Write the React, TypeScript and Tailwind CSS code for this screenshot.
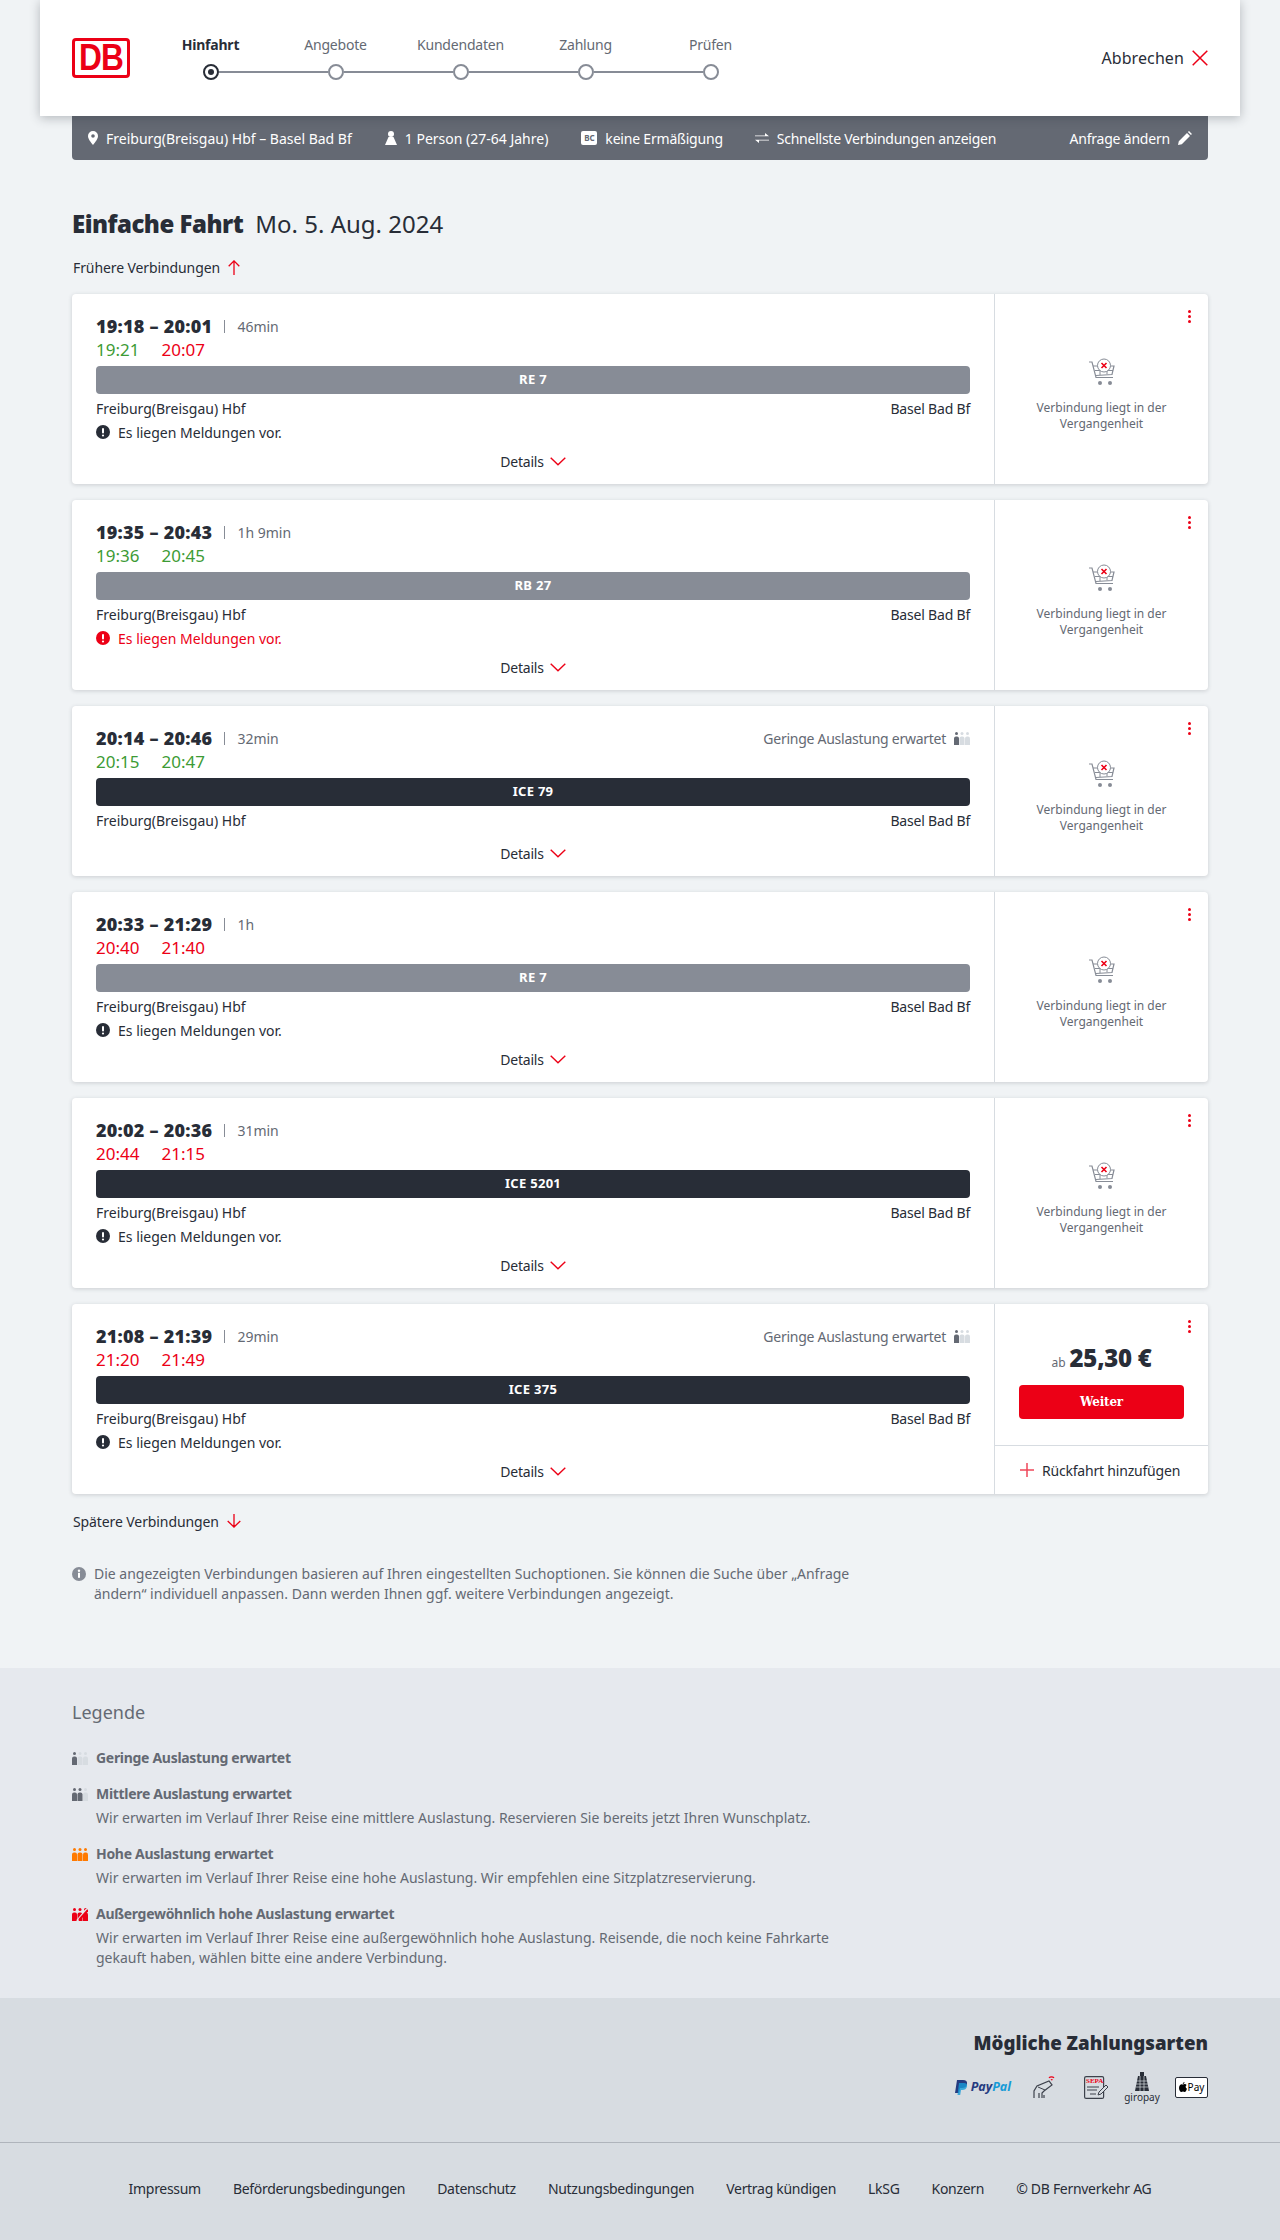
import React from "react";

const DARK = "#282d37";
const RED = "#ec0016";

function XIcon() {
  return (
    <svg width="16" height="16" viewBox="0 0 16 16" fill="none" className="shrink-0">
      <path d="M.7.7l14.600 14.600M15.300.7.700 15.300" stroke={RED} strokeWidth="1.500" />
    </svg>
  );
}
function Up() {
  return (
    <svg width="12" height="15" viewBox="0 0 12 15" fill="none" className="shrink-0">
      <path d="M6 15V1M.7 6.200 6 .9l5.300 5.300" stroke={RED} strokeWidth="1.300" />
    </svg>
  );
}
function Down() {
  return (
    <svg width="14" height="14" viewBox="0 0 14 14" fill="none" className="shrink-0">
      <path d="M7 0v13M.7 7 7 13l6.300-6" stroke={RED} strokeWidth="1.300" />
    </svg>
  );
}
function Chev() {
  return (
    <svg width="16" height="9" viewBox="0 0 16 9" fill="none" className="shrink-0">
      <path d="M.7.7 8 7.800 15.300.7" stroke={RED} strokeWidth="1.400" />
    </svg>
  );
}
function PlusIcon() {
  return (
    <svg width="14" height="14" viewBox="0 0 14 14" fill="none" className="shrink-0">
      <path d="M7 0v14M0 7h14" stroke="#f0475a" strokeWidth="1.500" />
    </svg>
  );
}
function Pin() {
  return (
    <svg width="10" height="14" viewBox="0 0 10 14" className="shrink-0">
      <path fillRule="evenodd" fill="#fff" d="M5 0a5 5 0 0 1 5 5c0 3-3 6.500-5 9-2-2.500-5-6-5-9a5 5 0 0 1 5-5zm0 3.200a1.800 1.800 0 1 0 0 3.600 1.800 1.800 0 0 0 0-3.600z" />
    </svg>
  );
}
function Person() {
  return (
    <svg width="12" height="14" viewBox="0 0 12 14" className="shrink-0">
      <circle cx="6" cy="3" r="3" fill="#fff" />
      <path d="M3.500 6h5L12 14H0z" fill="#fff" />
    </svg>
  );
}
function Swap() {
  return (
    <svg width="14" height="10" viewBox="0 0 14 10" className="shrink-0">
      <path d="M0 2.400h10V0l4 3.200H0zM14 7.600H4V10L0 6.800h14z" fill="#fff" />
    </svg>
  );
}
function Pencil() {
  return (
    <svg width="14" height="14" viewBox="0 0 14 14" className="shrink-0">
      <path d="M0 14l.8-3.800L9 2l3 3-8.200 8.200zM9.900 1.100 11 0l3 3-1.100 1.100z" fill="#fff" />
    </svg>
  );
}
function Alert({ color }: { color: string }) {
  return (
    <svg width="14" height="14" viewBox="0 0 14 14" className="shrink-0">
      <circle cx="7" cy="7" r="7" fill={color} />
      <rect x="6" y="3" width="2" height="5.500" rx="1" fill="#fff" />
      <circle cx="7" cy="10.500" r="1.100" fill="#fff" />
    </svg>
  );
}
function Info() {
  return (
    <svg width="14" height="14" viewBox="0 0 14 14" className="shrink-0">
      <circle cx="7" cy="7" r="7" fill="#878c96" />
      <circle cx="7" cy="3.700" r="1.200" fill="#fff" />
      <rect x="6" y="5.800" width="2" height="5" fill="#fff" />
    </svg>
  );
}
function Load({ level }: { level: 1 | 2 | 3 | 4 }) {
  const on = level === 3 ? "#ff7a00" : level === 4 ? RED : "#646973";
  const off = "#d7dce1";
  const c = (i: number) => (level >= i + 1 ? on : off);
  return (
    <svg width="16" height="13" viewBox="0 0 16 13" className="shrink-0">
      {[0, 1, 2].map((i) => (
        <g key={i} fill={c(i)}>
          <circle cx={2.500 + i * 5.500} cy="1.500" r="1.500" />
          <path d={`M${i * 5.500} 13V6.500a2 2 0 0 1 2-2h1a2 2 0 0 1 2 2V13z`} />
        </g>
      ))}
      {level === 4 && <path d="M5 13 15 1" stroke="#e6e9ee" strokeWidth="2" />}
      {level === 4 && <path d="M7 12 16 2" stroke={RED} strokeWidth="2" />}
    </svg>
  );
}
function Cart() {
  return (
    <svg width="28" height="28" viewBox="0 0 28 28" fill="none" className="shrink-0">
      <path d="M1 4h3l4 15.500h17" stroke="#878c96" strokeWidth="1.200" />
      <path d="M5 8h21l-2 8.500-16 1" stroke="#878c96" strokeWidth="1.200" />
      <path d="M7 12.500h18M12 8v9M19 8v8" stroke="#878c96" strokeWidth="1" />
      <circle cx="12" cy="25" r="2" fill="#878c96" />
      <circle cx="22" cy="25" r="2" fill="#878c96" />
      <circle cx="16" cy="7.500" r="6.500" fill="#fff" stroke="#878c96" strokeWidth="1" />
      <path d="M13.500 5l5 5M18.500 5l-5 5" stroke={RED} strokeWidth="1.600" />
    </svg>
  );
}
function Dots() {
  return (
    <div className="absolute right-[17px] top-4 flex flex-col gap-[2px]">
      <span className="block h-[3px] w-[3px] rounded-full bg-[#ec0016]" />
      <span className="block h-[3px] w-[3px] rounded-full bg-[#ec0016]" />
      <span className="block h-[3px] w-[3px] rounded-full bg-[#ec0016]" />
    </div>
  );
}

type Conn = {
  time: string;
  dur: string;
  a: string;
  aC: string;
  b: string;
  bC: string;
  train: string;
  dark?: boolean;
  msg?: "dark" | "red";
  load?: boolean;
  price?: boolean;
};

const G = "text-[#3d9b35]";
const R = "text-[#ec0016]";

const conns: Conn[] = [
  { time: "19:18 – 20:01", dur: "46min", a: "19:21", aC: G, b: "20:07", bC: R, train: "RE 7", msg: "dark" },
  { time: "19:35 – 20:43", dur: "1h 9min", a: "19:36", aC: G, b: "20:45", bC: G, train: "RB 27", msg: "red" },
  { time: "20:14 – 20:46", dur: "32min", a: "20:15", aC: G, b: "20:47", bC: G, train: "ICE 79", dark: true, load: true },
  { time: "20:33 – 21:29", dur: "1h", a: "20:40", aC: R, b: "21:40", bC: R, train: "RE 7", msg: "dark" },
  { time: "20:02 – 20:36", dur: "31min", a: "20:44", aC: R, b: "21:15", bC: R, train: "ICE 5201", dark: true, msg: "dark" },
  { time: "21:08 – 21:39", dur: "29min", a: "21:20", aC: R, b: "21:49", bC: R, train: "ICE 375", dark: true, msg: "dark", load: true, price: true },
];

function Card({ c }: { c: Conn }) {
  return (
    <div className="flex rounded bg-white shadow-[0_1px_4px_rgba(40,45,55,0.18)]">
      <div className="flex min-w-0 flex-1 flex-col px-6 pb-[11px] pt-[20px]">
        <div className="flex h-6 items-center justify-between">
          <div className="flex items-center">
            <span className="text-[18px] font-black tracking-[0.25px] text-[#282d37]">{c.time}</span>
            <span className="ml-3 h-[13px] w-px bg-[#878c96]" />
            <span className="ml-3 text-[14px] text-[#646973]">{c.dur}</span>
          </div>
          {c.load && (
            <div className="flex items-center gap-2 text-[14px] tracking-[-0.26px] text-[#646973]">
              <span>Geringe Auslastung erwartet</span>
              <Load level={1} />
            </div>
          )}
        </div>
        <div className="flex h-6 items-center gap-[22px] text-[17px]">
          <span className={c.aC}>{c.a}</span>
          <span className={c.bC}>{c.b}</span>
        </div>
        <div className={`mt-1 flex h-7 items-center justify-center rounded text-[13px] font-bold tracking-[0.3px] text-white ${c.dark ? "bg-[#282d37]" : "bg-[#878c96]"}`}>
          {c.train}
        </div>
        <div className="mt-[2px] flex h-6 items-center justify-between text-[14px] text-[#282d37]">
          <span>Freiburg(Breisgau) Hbf</span>
          <span className="tracking-[-0.2px]">Basel Bad Bf</span>
        </div>
        {c.msg && (
          <div className={`flex h-6 items-center gap-2 text-[14px] ${c.msg === "red" ? "text-[#ec0016]" : "text-[#282d37]"}`}>
            <Alert color={c.msg === "red" ? RED : DARK} />
            <span>Es liegen Meldungen vor.</span>
          </div>
        )}
        <div className={`flex h-6 items-center justify-center gap-[6px] text-[14px] tracking-[-0.2px] text-[#282d37] ${c.msg ? "mt-[5px]" : "mt-[9px]"}`}>
          <span>Details</span>
          <Chev />
        </div>
      </div>
      <div className="relative flex w-[214px] shrink-0 flex-col border-l border-[#d7dce1]">
        <Dots />
        {c.price ? (
          <>
            <div className="flex flex-1 flex-col items-center px-6 pt-[36px]">
              <div className="flex h-7 items-baseline gap-[4px]">
                <span className="text-[12px] text-[#646973]">ab</span>
                <span className="text-[24px] font-black tracking-[-0.3px] text-[#282d37]">25,30 €</span>
              </div>
              <button className="mt-[17px] h-[34px] w-[165px] rounded bg-[#ec0016] font-['DejaVu_Serif',serif] text-[12px] font-bold tracking-[-0.2px] text-white">Weiter</button>
            </div>
            <div className="flex h-[49px] items-center gap-2 border-t border-[#d7dce1] pl-[25px] text-[14px] tracking-[-0.2px] text-[#282d37]">
              <PlusIcon />
              <span>Rückfahrt hinzufügen</span>
            </div>
          </>
        ) : (
          <div className="flex flex-1 flex-col items-center justify-center px-6 pt-3 text-center">
            <Cart />
            <p className="mt-[14px] text-[12px] leading-4 text-[#646973]">Verbindung liegt in der Vergangenheit</p>
          </div>
        )}
      </div>
    </div>
  );
}

const steps = ["Hinfahrt", "Angebote", "Kundendaten", "Zahlung", "Prüfen"];

function Stepper() {
  return (
    <div className="ml-[18px] flex pb-px">
      {steps.map((s, i) => (
        <div key={s} className="flex w-[125px] flex-col items-center">
          <span className={`text-[14px] leading-5 tracking-[-0.2px] ${i === 0 ? "font-bold text-[#282d37]" : "text-[#646973]"}`}>{s}</span>
          <div className="mt-[9px] flex w-full items-center">
            <span className={`h-[2px] flex-1 ${i === 0 ? "" : "bg-[#878c96]"}`} />
            {i === 0 ? (
              <span className="flex h-4 w-4 items-center justify-center rounded-full border-2 border-[#282d37]">
                <span className="h-[6px] w-[6px] rounded-full bg-[#282d37]" />
              </span>
            ) : (
              <span className="h-4 w-4 rounded-full border-2 border-[#878c96]" />
            )}
            <span className={`h-[2px] flex-1 ${i === 4 ? "" : "bg-[#878c96]"}`} />
          </div>
        </div>
      ))}
    </div>
  );
}

function LegendItem({ level, title, text }: { level: 1 | 2 | 3 | 4; title: string; text?: string }) {
  return (
    <div className="flex gap-2">
      <div className="flex h-5 w-4 shrink-0 items-center"><Load level={level} /></div>
      <div className="w-[760px] text-[14px] leading-5 text-[#646973]">
        <div className="font-bold tracking-[-0.3px]">{title}</div>
        {text && <p className="mt-[4px]">{text}</p>}
      </div>
    </div>
  );
}

function PayIcons() {
  return (
    <div className="flex items-center justify-end">
      <div className="mr-[22px] flex items-center gap-[3px]">
        <svg width="13" height="15" viewBox="0 0 13 15"><path d="M2 0h6c3 0 4.500 1.500 4 4-.5 3-2.500 4-5 4H5l-1 5H0z" fill="#253b80" /><path d="M4 3h5c2 0 3.500 1 3 3.500S9.500 10 7.500 10H6l-.8 5H2.500z" fill="#179bd7" opacity=".8" /></svg>
        <span className="text-[12.500px] font-bold italic leading-none text-[#253b80]">Pay<span className="text-[#179bd7]">Pal</span></span>
      </div>
      <svg width="24" height="24" viewBox="0 0 24 24" fill="none" className="mr-[27px]">
        <path d="M1 23v-7l3-5 12-5 3 4-8 6-2 2v5M6 23v-5M11 23v-3" stroke="#3c414b" strokeWidth="1.200" />
        <path d="M5 12l7 3" stroke="#3c414b" strokeWidth="1" />
        <path d="M16 3c1-1.500 4-1.500 5 0M18 5c.5-.5 1-.5 1.500 0" stroke={RED} strokeWidth="1.200" />
      </svg>
      <div className="relative mr-[16px] flex h-[23px] w-[25px] flex-col items-center">
        <svg width="25" height="23" viewBox="0 0 25 23" fill="none">
          <rect x=".6" y=".6" width="19" height="21.800" rx="1.500" stroke="#3c414b" strokeWidth="1.200" />
          <path d="M3 11h12M3 14h10M6 18h6" stroke="#3c414b" strokeWidth="1" />
          <path d="M14 19l1-3 7-7 2 2-7 7z" fill="#d7dce1" stroke="#3c414b" strokeWidth="1" />
        </svg>
        <span className="absolute left-[2px] top-[2px] font-['Liberation_Serif',serif] text-[7px] font-bold leading-[7px] text-[#ec0016]">SEPA</span>
      </div>
      <div className="mr-[16px] flex w-[34px] flex-col items-center">
        <svg width="14" height="19" viewBox="0 0 14 19">
          <rect x="5" y="0" width="4" height="4" fill="#282d37" />
          <path d="M3 4h8l3 15H0z" fill="#282d37" />
          <path d="M1 9h12M1 12h12M1 15h12M5 4v15M9 4v15" stroke="#d7dce1" strokeWidth=".7" />
        </svg>
        <span className="mt-[1px] text-[10px] leading-[10px] text-[#282d37]">giropay</span>
      </div>
      <div className="flex h-[21px] w-[33px] items-center justify-center gap-[1px] rounded-[2px] border border-[#282d37] bg-white">
        <svg width="8" height="10" viewBox="0 0 8 10"><path d="M5.500 0c.1 1-.8 2-1.700 2C3.700 1 4.600.1 5.500 0zM4 2.500c.5 0 1-.4 1.800-.4.700 0 1.400.3 1.800 1-1.500 1-1.200 3 .4 3.600C7.500 8 6.700 10 5.600 10c-.6 0-1-.4-1.600-.4S3 10 2.400 10C1.200 10 0 7.800 0 6c0-2.300 1.400-3.800 2.700-3.800.5 0 .9.300 1.300.3z" fill="#000" /></svg>
        <span className="text-[10px] leading-none text-black">Pay</span>
      </div>
    </div>
  );
}

const links = ["Impressum", "Beförderungsbedingungen", "Datenschutz", "Nutzungsbedingungen", "Vertrag kündigen", "LkSG", "Konzern", "© DB Fernverkehr AG"];

export default function App() {
  return (
    <div className="flex min-h-[2240px] flex-col bg-[#f0f3f5] font-['Noto_Sans',sans-serif] text-[#282d37]">
      <header className="relative z-10 mx-10 flex h-[116px] items-center justify-between bg-white pl-8 pr-8 shadow-[0_2px_10px_rgba(40,45,55,0.3)]">
        <div className="flex items-center">
          <div className="flex h-10 w-[58px] items-center justify-center overflow-hidden rounded-[4px] border-[3px] border-[#ec0016] bg-white font-['Liberation_Sans',sans-serif] text-[36px] font-bold leading-none text-[#ec0016]">
            <span className="scale-x-[0.88] tracking-[-1px]">DB</span>
          </div>
          <Stepper />
        </div>
        <div className="flex items-center gap-2 text-[16px] text-[#282d37]">
          <span className="tracking-[0.1px]">Abbrechen</span>
          <XIcon />
        </div>
      </header>

      <div className="mx-[72px] flex h-11 items-center justify-between rounded-b bg-[#646973] px-4 text-[14px] text-white">
        <div className="flex items-center">
          <span className="flex items-center gap-2"><Pin />Freiburg(Breisgau) Hbf – Basel Bad Bf</span>
          <span className="ml-[33px] flex items-center gap-2"><Person />1 Person (27-64 Jahre)</span>
          <span className="ml-[33px] flex items-center gap-2 tracking-[-0.2px]">
            <span className="flex h-[14px] w-4 items-center justify-center rounded-[2px] bg-white text-[8px] font-bold leading-none text-[#646973]">BC</span>
            keine Ermäßigung
          </span>
          <span className="ml-[32px] flex items-center gap-2 tracking-[-0.25px]"><Swap />Schnellste Verbindungen anzeigen</span>
        </div>
        <span className="flex items-center gap-2 tracking-[-0.2px]">Anfrage ändern<Pencil /></span>
      </div>

      <main className="mx-[72px]">
        <h1 className="mt-[47px] flex h-[34px] items-center gap-3 text-[24px] leading-none">
          <span className="font-black tracking-[-0.5px]">Einfache Fahrt</span>
          <span>Mo. 5. Aug. 2024</span>
        </h1>
        <div className="mt-[14px] flex h-6 items-center gap-2 pl-px text-[14px] tracking-[-0.1px]">
          <span>Frühere Verbindungen</span>
          <Up />
        </div>
        <div className="mt-[15px] flex flex-col gap-4">
          {conns.map((c, i) => <Card key={i} c={c} />)}
        </div>
        <div className="mt-[15px] flex h-6 items-center gap-2 pl-px text-[14px] tracking-[-0.1px]">
          <span>Spätere Verbindungen</span>
          <Down />
        </div>
        <div className="mt-[31px] flex w-[780px] gap-2 text-[14px] leading-5 text-[#646973]">
          <div className="flex h-5 items-center"><Info /></div>
          <p>Die angezeigten Verbindungen basieren auf Ihren eingestellten Suchoptionen. Sie können die Suche über „Anfrage ändern“ individuell anpassen. Dann werden Ihnen ggf. weitere Verbindungen angezeigt.</p>
        </div>
      </main>

      <section className="mt-[64px] h-[330px] bg-[#e6e9ee] px-[72px] pt-[30px]">
        <h2 className="text-[18px] leading-7 text-[#646973]">Legende</h2>
        <div className="mt-[22px] flex flex-col gap-4">
          <LegendItem level={1} title="Geringe Auslastung erwartet" />
          <LegendItem level={2} title="Mittlere Auslastung erwartet" text="Wir erwarten im Verlauf Ihrer Reise eine mittlere Auslastung. Reservieren Sie bereits jetzt Ihren Wunschplatz." />
          <LegendItem level={3} title="Hohe Auslastung erwartet" text="Wir erwarten im Verlauf Ihrer Reise eine hohe Auslastung. Wir empfehlen eine Sitzplatzreservierung." />
          <LegendItem level={4} title="Außergewöhnlich hohe Auslastung erwartet" text="Wir erwarten im Verlauf Ihrer Reise eine außergewöhnlich hohe Auslastung. Reisende, die noch keine Fahrkarte gekauft haben, wählen bitte eine andere Verbindung." />
        </div>
      </section>

      <footer className="flex flex-1 flex-col bg-[#d7dce1]">
        <div className="flex h-[145px] flex-col border-b border-[#afb4bb] px-[72px] pt-[30px]">
          <h2 className="text-right text-[18.700px] font-black leading-[30px]">Mögliche Zahlungsarten</h2>
          <div className="mt-[14px]"><PayIcons /></div>
        </div>
        <nav className="flex flex-1 items-center justify-center gap-8 pb-[6px] text-[14px] tracking-[-0.3px] text-[#282d37]">
          {links.map((l) => <span key={l}>{l}</span>)}
        </nav>
      </footer>
    </div>
  );
}
